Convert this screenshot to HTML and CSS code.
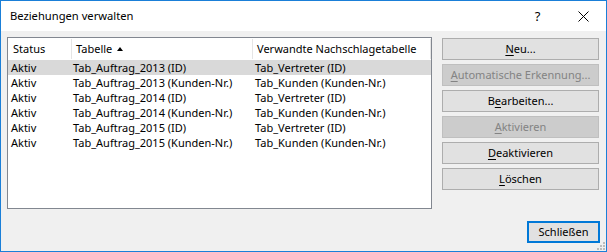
FILE: index.html
```html
<!DOCTYPE html>
<html lang="de">
<head>
<meta charset="utf-8">
<title>Beziehungen verwalten</title>
<link rel="stylesheet" href="styles.css">
</head>
<body>
<div class="window">
  <div class="titlebar">
    <span class="title">Beziehungen verwalten</span>
    <div class="caption-buttons">
      <span class="cap-btn help">?</span>
      <span class="cap-btn close">
        <svg width="11" height="11" viewBox="0 0 11 11"><path d="M0.5 0.5 L10.5 10.5 M10.5 0.5 L0.5 10.5" stroke="#000" stroke-width="1" fill="none"/></svg>
      </span>
    </div>
  </div>
  <div class="content">
    <div class="main">
      <div class="listbox">
        <div class="lv-header">
          <div class="hcell c1">Status</div>
          <div class="hcell c2">Tabelle <span class="sort-arrow"></span></div>
          <div class="hcell c3">Verwandte Nachschlagetabelle</div>
        </div>
        <div class="lv-row selected"><span class="c1">Aktiv</span><span class="c2">Tab_Auftrag_2013 (ID)</span><span class="c3">Tab_Vertreter (ID)</span></div>
        <div class="lv-row"><span class="c1">Aktiv</span><span class="c2">Tab_Auftrag_2013 (Kunden-Nr.)</span><span class="c3">Tab_Kunden (Kunden-Nr.)</span></div>
        <div class="lv-row"><span class="c1">Aktiv</span><span class="c2">Tab_Auftrag_2014 (ID)</span><span class="c3">Tab_Vertreter (ID)</span></div>
        <div class="lv-row"><span class="c1">Aktiv</span><span class="c2">Tab_Auftrag_2014 (Kunden-Nr.)</span><span class="c3">Tab_Kunden (Kunden-Nr.)</span></div>
        <div class="lv-row"><span class="c1">Aktiv</span><span class="c2">Tab_Auftrag_2015 (ID)</span><span class="c3">Tab_Vertreter (ID)</span></div>
        <div class="lv-row"><span class="c1">Aktiv</span><span class="c2">Tab_Auftrag_2015 (Kunden-Nr.)</span><span class="c3">Tab_Kunden (Kunden-Nr.)</span></div>
      </div>
      <div class="buttons">
        <div class="btn"><u>N</u>eu...</div>
        <div class="btn disabled"><u>A</u>utomatische Erkennung...</div>
        <div class="btn">B<u>e</u>arbeiten...</div>
        <div class="btn disabled"><u>A</u>ktivieren</div>
        <div class="btn"><u>D</u>eaktivieren</div>
        <div class="btn"><u>L</u>öschen</div>
      </div>
    </div>
    <div class="footer">
      <div class="btn default">Schließen</div>
    </div>
    <svg class="grip" width="8" height="8" viewBox="0 0 8 8">
      <rect x="6" y="0" width="2" height="2" fill="#bcbcbc"/>
      <rect x="3" y="3" width="2" height="2" fill="#bcbcbc"/>
      <rect x="6" y="3" width="2" height="2" fill="#bcbcbc"/>
      <rect x="0" y="6" width="2" height="2" fill="#bcbcbc"/>
      <rect x="3" y="6" width="2" height="2" fill="#bcbcbc"/>
      <rect x="6" y="6" width="2" height="2" fill="#bcbcbc"/>
    </svg>
  </div>
</div>
</body>
</html>
```
FILE: styles.css
```css
* { box-sizing: border-box; }
html, body { margin: 0; padding: 0; }
body {
  font-family: "Noto Sans", "Open Sans", sans-serif;
  font-size: 11px;
  color: #000;
  background: #fff;
}
.window {
  width: 607px;
  height: 252px;
  border: 1px solid #1a7fd8;
  display: flex;
  flex-direction: column;
  background: #f0f0f0;
}
.titlebar {
  height: 30px;
  background: #fff;
  display: flex;
  align-items: center;
  justify-content: space-between;
  flex: none;
}
.title {
  padding-left: 9px;
  font-size: 11.2px;
  padding-bottom: 1px;
}
.caption-buttons { display: flex; height: 30px; }
.cap-btn {
  width: 46px;
  height: 30px;
  display: flex;
  align-items: center;
  justify-content: center;
  font-size: 13px;
}
.cap-btn.help { padding-bottom: 1px; padding-left: 1px; }
.content {
  flex: 1;
  position: relative;
  padding: 6px 6px 0 6px;
}
.main {
  display: flex;
  gap: 10px;
}
.listbox {
  width: 425px;
  height: 172px;
  border: 1px solid #828790;
  background: #fff;
}
.lv-header {
  display: grid;
  grid-template-columns: 64px 181px 1fr;
  height: 22px;
  align-items: center;
}
.hcell {
  height: 20px;
  line-height: 19px;
  border-right: 1px solid #e5e5e5;
}
.hcell.c1 { padding-left: 5px; }
.hcell.c2 { padding-left: 4px; }
.hcell.c3 { padding-left: 4px; }
.sort-arrow {
  display: inline-block;
  width: 0;
  height: 0;
  border-left: 3.5px solid transparent;
  border-right: 3.5px solid transparent;
  border-bottom: 4px solid #000;
  margin-left: 2px;
  vertical-align: 2px;
}
.lv-row {
  display: grid;
  grid-template-columns: 64px 181px 1fr;
  height: 15px;
  line-height: 15px;
  white-space: nowrap;
}
.lv-row.selected { background: #d9d9d9; }
.lv-row .c1 { padding-left: 3px; }
.lv-row .c2 { padding-left: 1px; }
.lv-row .c3 { padding-left: 2px; }
.buttons {
  display: flex;
  flex-direction: column;
  gap: 4px;
  margin-top: 1px;
  width: 157px;
}
.btn {
  height: 22px;
  border: 1px solid #adadad;
  background: #e1e1e1;
  display: flex;
  align-items: center;
  justify-content: center;
  padding-bottom: 1px;
  white-space: nowrap;
}
.btn u { text-decoration-thickness: 1px; text-underline-offset: 2px; }
.btn.disabled {
  background: #cccccc;
  border-color: #bfbfbf;
  color: #838383;
}
.footer {
  display: flex;
  justify-content: flex-end;
  margin-top: 12px;
}
.btn.default {
  width: 73px;
  height: 22px;
  border: 2px solid #0078d7;
}
.grip {
  position: absolute;
  right: 1px;
  bottom: 1px;
}
```
